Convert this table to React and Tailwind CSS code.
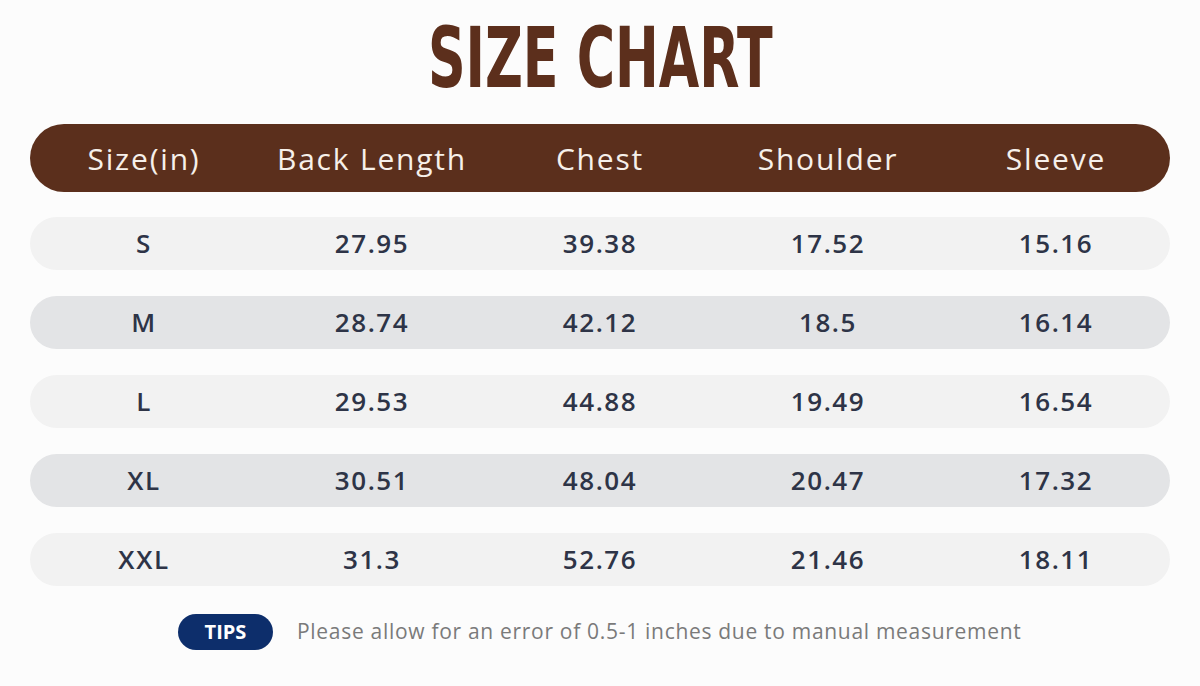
import React from "react";

const headers = ["Size(in)", "Back Length", "Chest", "Shoulder", "Sleeve"];

const rows = [
  ["S", "27.95", "39.38", "17.52", "15.16"],
  ["M", "28.74", "42.12", "18.5", "16.14"],
  ["L", "29.53", "44.88", "19.49", "16.54"],
  ["XL", "30.51", "48.04", "20.47", "17.32"],
  ["XXL", "31.3", "52.76", "21.46", "18.11"],
];

export default function App() {
  return (
    <div className="w-[1200px] h-[686px] bg-[#fcfcfc] font-['Open_Sans',sans-serif] overflow-hidden">
      <div className="flex justify-center pt-[17px] h-[112px]">
        <h1 className="font-['DejaVu_Sans_Condensed',sans-serif] font-bold text-[83px] leading-none text-[#5c2f1c] scale-x-[0.7]">
          SIZE CHART
        </h1>
      </div>

      <div className="px-[30px] mt-[12px]">
        <div className="grid grid-cols-5 items-center h-[68px] rounded-full bg-[#5b2f1c] text-[#f6f0ea] text-[30px] font-medium tracking-[1.8px]">
          {headers.map((h) => (
            <div key={h} className="text-center">{h}</div>
          ))}
        </div>

        <div className="mt-[25px] flex flex-col gap-[26px]">
          {rows.map((r, i) => (
            <div
              key={r[0]}
              className={`grid grid-cols-5 items-center h-[53px] rounded-full text-[26px] font-semibold tracking-[1.6px] text-[#2e3447] ${i % 2 === 0 ? "bg-[#f2f2f2]" : "bg-[#e3e4e6]"}`}
            >
              {r.map((c, j) => (
                <div key={j} className="text-center">{c}</div>
              ))}
            </div>
          ))}
        </div>

        <div className="flex items-center mt-[28px] pl-[148px] gap-[24px]">
          <span className="flex items-center justify-center w-[95px] h-[36px] rounded-full bg-[#0d2e6b] text-white font-bold text-[20px]">
            TIPS
          </span>
          <span className="text-[21px] tracking-[0.7px] text-[#7a7a7a]">
            Please allow for an error of 0.5-1 inches due to manual measurement
          </span>
        </div>
      </div>
    </div>
  );
}
